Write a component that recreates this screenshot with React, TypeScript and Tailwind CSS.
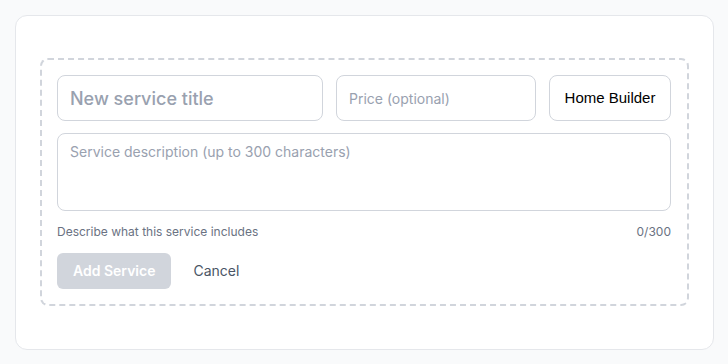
import { useState } from 'react';

export default function App() {
  const [title, setTitle] = useState('');
  const [price, setPrice] = useState('');
  const [description, setDescription] = useState('');

  return (
    <div className="min-h-screen bg-gray-50 pl-[15px] pr-[14px] pt-[15px] pb-[14px] font-['Inter',sans-serif]">
      <div className="rounded-xl border border-gray-200 bg-white px-6 pt-[42px] pb-[43px]">
        <div className="rounded-lg border-2 border-dashed border-gray-300 pl-[15px] pr-[16px] py-[15px]">
          <div className="flex gap-[13px]">
            <input
              value={title}
              onChange={(e) => setTitle(e.target.value)}
              placeholder="New service title"
              className="h-[46px] min-w-0 flex-1 rounded-lg border border-gray-300 px-3 text-lg font-medium text-gray-900 placeholder:text-gray-400 outline-none"
            />
            <input
              value={price}
              onChange={(e) => setPrice(e.target.value)}
              placeholder="Price (optional)"
              className="h-[46px] w-[200px] rounded-lg border border-gray-300 px-3 text-sm text-gray-900 placeholder:text-gray-400 outline-none"
            />
            <button className="h-[46px] w-[122px] rounded-lg border border-gray-300 bg-white text-[15px] text-black font-['Liberation_Sans',Arial,sans-serif]">
              Home Builder
            </button>
          </div>
          <textarea
            value={description}
            onChange={(e) => setDescription(e.target.value.slice(0, 300))}
            placeholder="Service description (up to 300 characters)"
            className="mt-3 block h-[78px] w-full resize-none rounded-lg border border-gray-300 px-3 py-2 text-sm text-gray-900 placeholder:text-gray-400 outline-none"
          />
          <div className="mt-[13px] flex justify-between text-xs text-gray-500">
            <span>Describe what this service includes</span>
            <span>{description.length}/300</span>
          </div>
          <div className="mt-[13px] flex items-center gap-[6px]">
            <button
              disabled={!title}
              className="h-9 rounded-md bg-gray-300 px-4 text-sm font-semibold text-white"
            >
              Add Service
            </button>
            <button className="h-9 px-4 text-sm text-gray-600">Cancel</button>
          </div>
        </div>
      </div>
    </div>
  );
}
